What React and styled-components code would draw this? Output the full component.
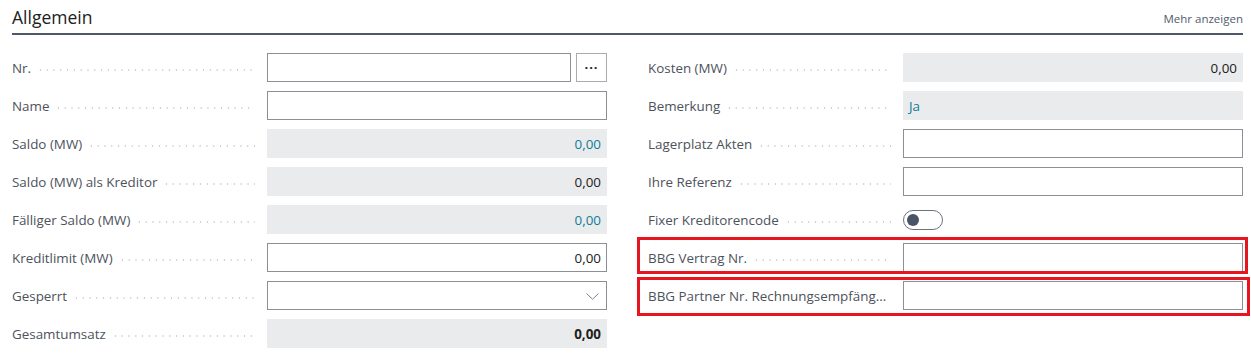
import styled, { createGlobalStyle } from "styled-components";

const GlobalStyle = createGlobalStyle`
  html, body {
    margin: 0;
    padding: 0;
    background: #ffffff;
  }
  body {
    font-family: "Segoe UI", "Open Sans", sans-serif;
    color: #212121;
  }
`;

const leftFields = [
  { label: "Nr.", kind: "lookup" },
  { label: "Name", kind: "input" },
  { label: "Saldo (MW)", kind: "readonly", value: "0,00", tone: "link", align: "right" },
  { label: "Saldo (MW) als Kreditor", kind: "readonly", value: "0,00", align: "right" },
  { label: "Fälliger Saldo (MW)", kind: "readonly", value: "0,00", tone: "link", align: "right" },
  { label: "Kreditlimit (MW)", kind: "input", value: "0,00", align: "right" },
  { label: "Gesperrt", kind: "select" },
  { label: "Gesamtumsatz", kind: "readonly", value: "0,00", tone: "strong", align: "right" },
];

const rightFields = [
  { label: "Kosten (MW)", kind: "readonly", value: "0,00", align: "right" },
  { label: "Bemerkung", kind: "readonly", value: "Ja", tone: "link" },
  { label: "Lagerplatz Akten", kind: "input" },
  { label: "Ihre Referenz", kind: "input" },
  { label: "Fixer Kreditorencode", kind: "toggle" },
  { label: "BBG Vertrag Nr.", kind: "input", mark: { top: 6, bottom: 2, right: 5 } },
  { label: "BBG Partner Nr. Rechnungsempfäng...", kind: "input", mark: { top: 4, bottom: 6, right: 7 } },
];

export default function App() {
  return (
    <>
      <GlobalStyle />
      <Section>
        <Header>
          <Title>Allgemein</Title>
          <MoreLink>Mehr anzeigen</MoreLink>
        </Header>
        <Columns>
          <Column>
            {leftFields.map((f) => (
              <FieldRow key={f.label} field={f} />
            ))}
          </Column>
          <Column>
            {rightFields.map((f) => (
              <FieldRow key={f.label} field={f} />
            ))}
          </Column>
        </Columns>
      </Section>
    </>
  );
}

function FieldRow({ field }) {
  return (
    <Row $mark={field.mark}>
      <Label>
        <LabelText>{field.label}</LabelText>
        <Leader />
      </Label>
      <FieldControl field={field} />
    </Row>
  );
}

function FieldControl({ field }) {
  if (field.kind === "lookup") {
    return (
      <Lookup>
        <Box />
        <DotsButton>···</DotsButton>
      </Lookup>
    );
  }
  if (field.kind === "select") {
    return (
      <Box>
        <Chevron width="13" height="7" viewBox="0 0 13 7">
          <path d="M0.5 0.5 L6.5 6.2 L12.5 0.5" fill="none" stroke="#7a828e" strokeWidth="1" />
        </Chevron>
      </Box>
    );
  }
  if (field.kind === "toggle") {
    return (
      <Toggle>
        <Knob />
      </Toggle>
    );
  }
  return (
    <Box $readOnly={field.kind === "readonly"} $align={field.align} $tone={field.tone}>
      {field.value}
    </Box>
  );
}

const Section = styled.div`
  padding: 0 8px 0 12px;
`;

const Header = styled.div`
  display: flex;
  justify-content: space-between;
  align-items: flex-end;
  height: 35px;
  border-bottom: 2px solid #4f5868;
  box-sizing: border-box;
  padding-bottom: 5px;
  margin-bottom: 18px;
`;

const Title = styled.h2`
  margin: 0;
  font-size: 17.5px;
  font-weight: 400;
  line-height: 22px;
  color: #212121;
`;

const MoreLink = styled.span`
  font-size: 11.5px;
  line-height: 16px;
  color: #505c6d;
  margin-bottom: 1px;
`;

const Columns = styled.div`
  display: grid;
  grid-template-columns: 1fr 1fr;
  column-gap: 41px;
`;

const Column = styled.div`
  display: flex;
  flex-direction: column;
  gap: 9px;
`;

const Row = styled.div`
  position: relative;
  display: grid;
  grid-template-columns: 255px 1fr;
  height: 29px;

  ${({ $mark }) =>
    $mark &&
    `
    &::after {
      content: "";
      position: absolute;
      top: -${$mark.top}px;
      bottom: -${$mark.bottom}px;
      left: -11px;
      right: -${$mark.right}px;
      border: 3px solid #e8151f;
      pointer-events: none;
    }
  `}
`;

const Label = styled.div`
  display: flex;
  align-items: center;
  min-width: 0;
  padding-right: 12px;
`;

const LabelText = styled.span`
  font-size: 13.4px;
  color: #4d525b;
  white-space: nowrap;
`;

const Leader = styled.span`
  flex: 1;
  height: 2px;
  margin: 5px 0 0 6px;
  background-image: radial-gradient(circle, #c9cbce 0.9px, transparent 1.1px);
  background-size: 6.8px 2px;
  background-repeat: repeat-x;
`;

const Box = styled.div`
  position: relative;
  display: flex;
  align-items: center;
  justify-content: ${({ $align }) => ($align === "right" ? "flex-end" : "flex-start")};
  flex: 1;
  height: 29px;
  box-sizing: border-box;
  padding: 0 5px;
  font-size: 13.4px;
  color: ${({ $tone }) => ($tone === "link" ? "#0e7d98" : "#212121")};
  font-weight: ${({ $tone }) => ($tone === "strong" ? 700 : 400)};
  background: ${({ $readOnly }) => ($readOnly ? "#eaebec" : "#ffffff")};
  border: 1px solid ${({ $readOnly }) => ($readOnly ? "#eaebec" : "#8c9096")};
`;

const Lookup = styled.div`
  display: flex;
  gap: 5px;
`;

const DotsButton = styled.div`
  width: 31px;
  height: 29px;
  box-sizing: border-box;
  border: 1px solid #a9abaf;
  display: flex;
  align-items: center;
  justify-content: center;
  font-size: 13px;
  font-weight: 700;
  letter-spacing: 1px;
  color: #212121;
  padding-bottom: 2px;
`;

const Chevron = styled.svg`
  position: absolute;
  right: 7px;
  top: 11px;
`;

const Toggle = styled.div`
  align-self: center;
  width: 40px;
  height: 20px;
  box-sizing: border-box;
  border: 1px solid #6b7280;
  border-radius: 10px;
  display: flex;
  align-items: center;
  padding-left: 3px;
`;

const Knob = styled.span`
  width: 12px;
  height: 12px;
  border-radius: 50%;
  background: #4a5467;
`;
